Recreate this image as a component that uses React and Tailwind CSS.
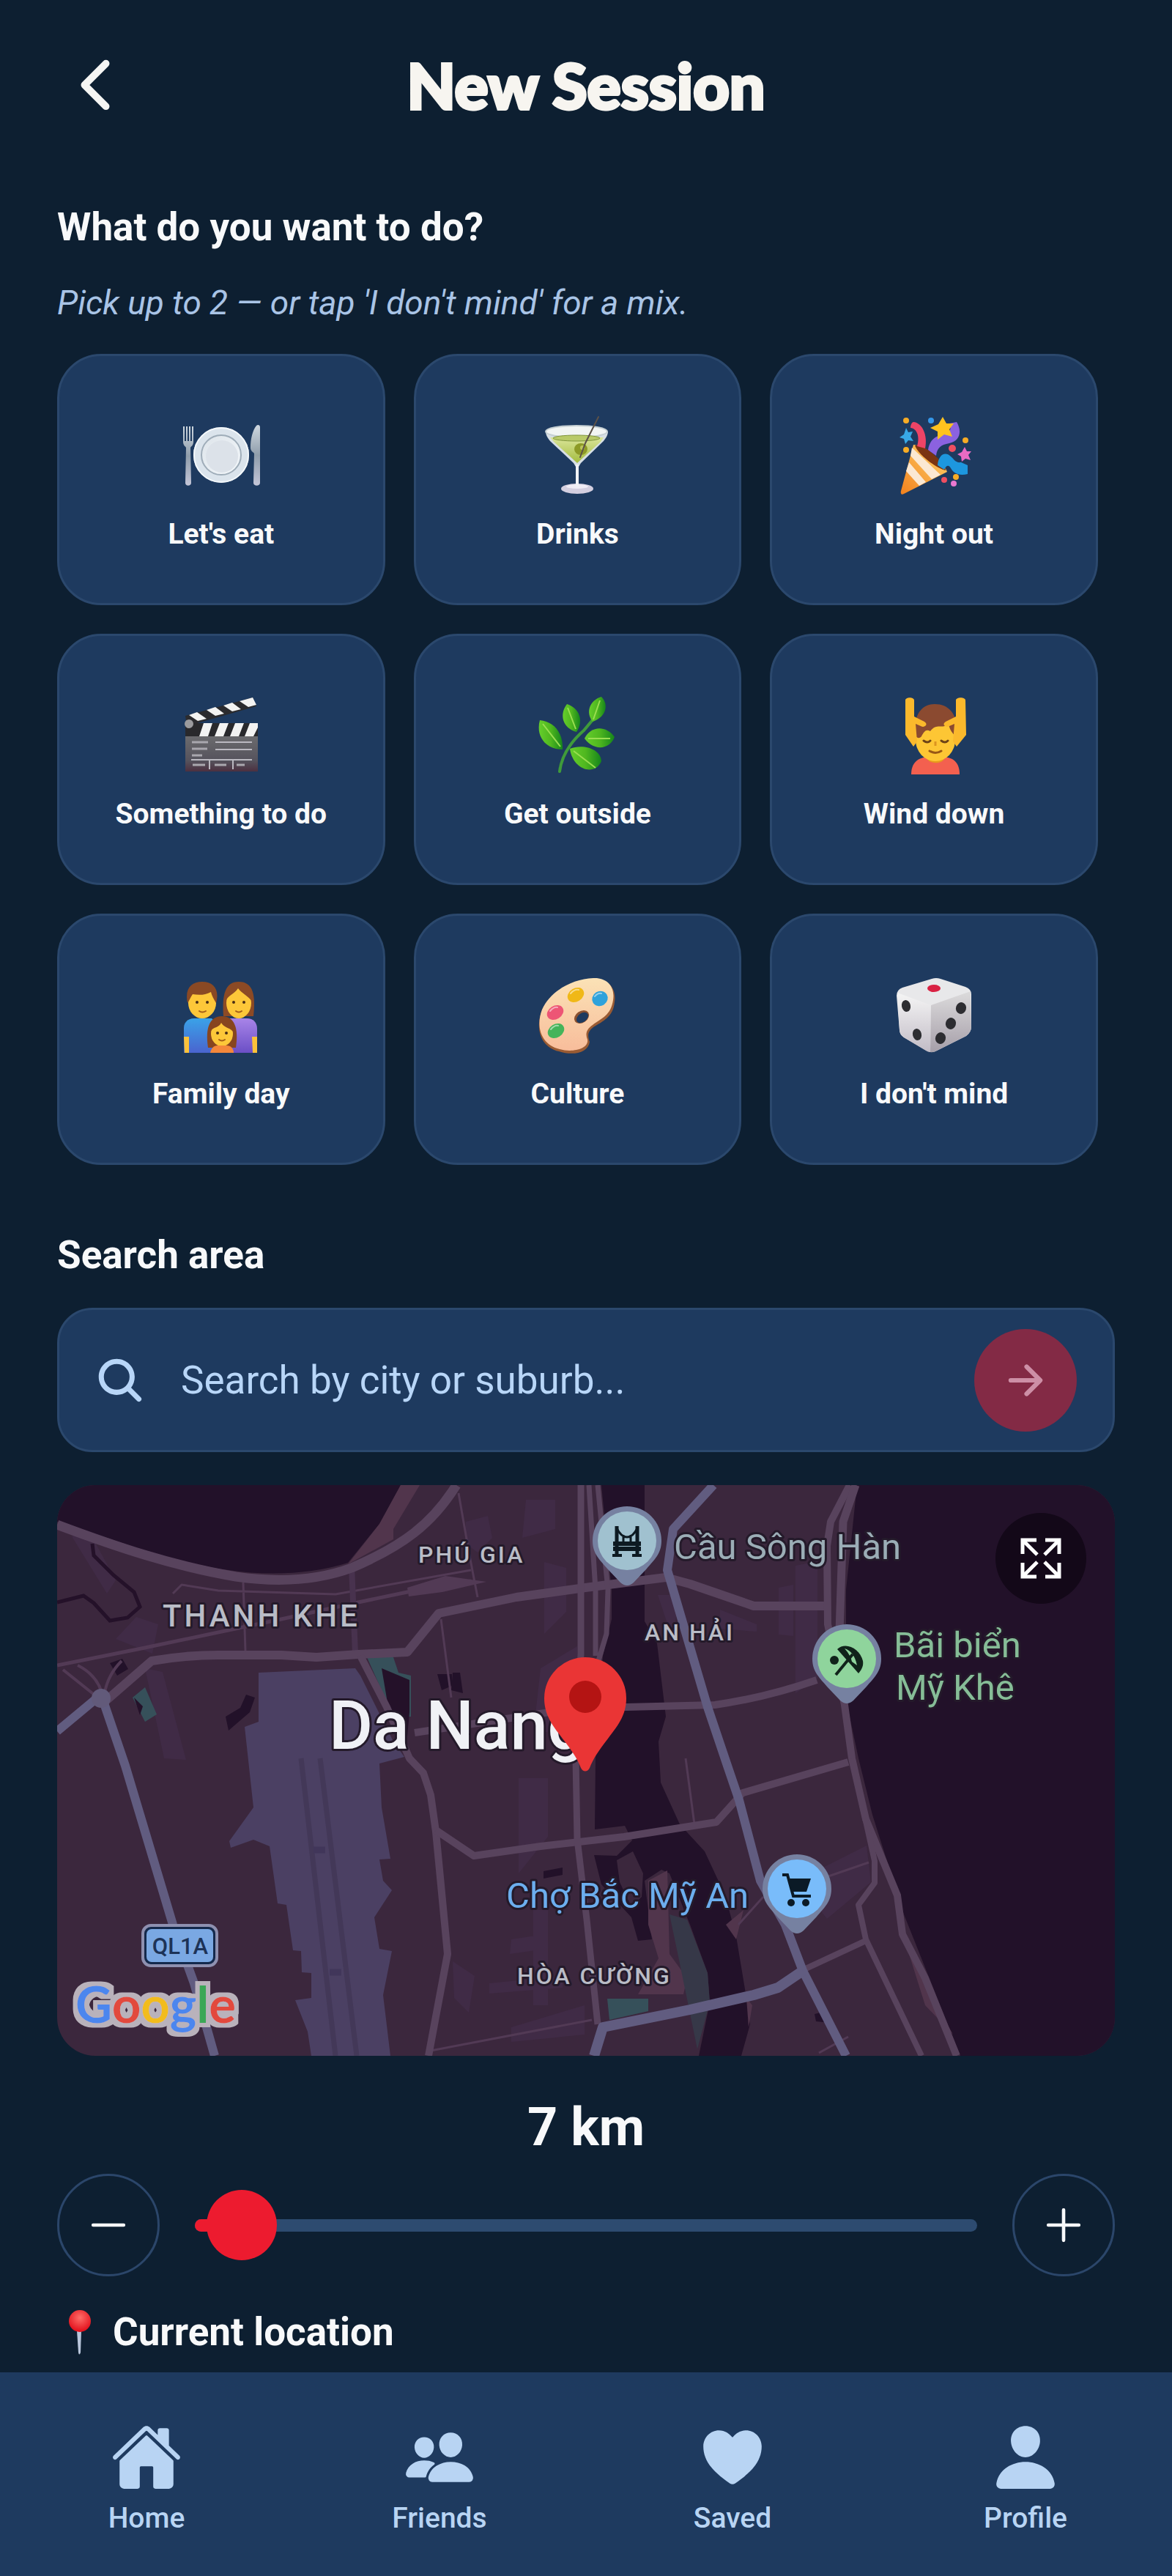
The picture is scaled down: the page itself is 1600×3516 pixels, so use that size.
import { useState } from "react";
import {
  IoAdd,
  IoArrowForward,
  IoChevronBack,
  IoHeart,
  IoHome,
  IoPeople,
  IoPerson,
  IoRemove,
  IoSearch,
} from "react-icons/io5";

function Emoji({ children }) {
  return (
    <svg viewBox="0 0 110 110" className="size-[110px]" aria-hidden="true">
      {children}
    </svg>
  );
}

function PlateEmoji() {
  return (
    <Emoji>
      <defs>
        <linearGradient id="plate" x1="0" y1="0" x2="1" y2="1">
          <stop offset="0" stopColor="#dde4ea" />
          <stop offset="1" stopColor="#f4f8fb" />
        </linearGradient>
        <linearGradient id="silver" x1="0" y1="0" x2="0" y2="1">
          <stop offset="0" stopColor="#cfd8e0" />
          <stop offset="0.5" stopColor="#8f9dab" />
          <stop offset="1" stopColor="#c4c6d8" />
        </linearGradient>
      </defs>
      <path d="M3 15v21c0 5 3 6 4 8l-1 48c0 5 8 5 8 0l-1-48c1-2 4-3 4-8V15h-2v20h-2V15h-2v20H9V15H7v20H5V15z" fill="url(#silver)" />
      <path d="M103 14c-5 6-8 18-8 30 0 5 4 6 5 8l-1 40c0 5 9 5 9 0V16c0-3-3-4-5-2z" fill="url(#silver)" />
      <circle cx="55" cy="54" r="38" fill="#dbe4ec" />
      <circle cx="55" cy="54" r="37" fill="none" stroke="#f3f7fa" strokeWidth="2" />
      <circle cx="55" cy="54" r="27" fill="url(#plate)" stroke="#9fadb9" strokeWidth="2" />
      <circle cx="56" cy="56" r="22" fill="#dce2e9" />
    </Emoji>
  );
}

function DrinkEmoji() {
  return (
    <Emoji>
      <defs>
        <linearGradient id="martini" x1="0" y1="0" x2="0" y2="1">
          <stop offset="0" stopColor="#dbe59a" />
          <stop offset="1" stopColor="#a3bc3e" />
        </linearGradient>
      </defs>
      <path d="M12 22c0 5 3 9 6 13l32 30 3 5v24l-14 5h32l-14-5V70l3-5 31-30c3-4 6-8 6-13z" fill="#d7dfe5" />
      <path d="M18 30h73l-4 6-32 29-32-29z" fill="url(#martini)" />
      <ellipse cx="54" cy="22" rx="42" ry="8" fill="#f2f5f4" stroke="#c5cfd3" strokeWidth="2" />
      <ellipse cx="54" cy="31" rx="32" ry="4" fill="#b9ca69" stroke="#7f943c" strokeWidth="1" />
      <ellipse cx="60" cy="46" rx="9" ry="8" fill="#8d9a26" />
      <circle cx="62" cy="44" r="3" fill="#bcc75b" />
      <path d="M84 2 66 38l-7 19" stroke="#5c5148" strokeWidth="2" fill="none" strokeLinecap="round" />
      <ellipse cx="55" cy="100" rx="22" ry="7" fill="#d4cfe0" />
      <ellipse cx="55" cy="97" rx="15" ry="3" fill="#efecf5" />
      <path d="M53 67h4v30h-4z" fill="#f1f2f6" />
    </Emoji>
  );
}

function PartyEmoji() {
  return (
    <Emoji>
      <defs>
        <linearGradient id="cone" x1="1" y1="0" x2="0" y2="1">
          <stop offset="0" stopColor="#ffd66e" />
          <stop offset="1" stopColor="#f2811d" />
        </linearGradient>
      </defs>
      <path d="M27 40C38 40 68 62 73 77L14 107c-3 2-5 0-4-4z" fill="url(#cone)" />
      <path d="M23 55 52 87l12-6-39-37zM17 76l18 20 9-5-23-27z" fill="#fbe8d2" />
      <path d="M29 41c10-5 42 24 42 34-12-2-38-22-42-34z" fill="#7b3412" />
      <path d="M27 9c12 1 20 18 16 36l-11-3c4-13 0-24-9-25 0-4 2-8 4-8z" fill="#ee4466" />
      <path d="M86 9c8 13 4 26-10 29-12 2-17 7-18 17l-11-8c2-16 14-20 23-22 8-2 9-8 6-14z" fill="#8b62e0" />
      <path d="M60 68c1-14 10-20 18-12 5 4 6 9 14 8l9 4v12c-12 3-19-1-23-8-3-5-6-4-9 2z" fill="#1d97df" />
      <path d="m67 2 5 9 10 0-6 8 4 10-11-3-9 7 0-11-10-5 11-5z" fill="#ffc21f" />
      <path d="m17 17 3 6 6-1-3 7 4 6-7-1-4 5-2-7-6-2 6-4z" fill="#38a8e6" />
      <path d="m97 43 3 6 6 0-4 5 3 7-7-2-5 4-1-7-5-3 6-3z" fill="#e96bc3" />
      <g fill="#f7ac25"><circle cx="17" cy="7" r="4" /><circle cx="98" cy="34" r="4" /><circle cx="17" cy="47" r="4" /><circle cx="85" cy="84" r="4" /></g>
      <g fill="#ef4f61"><circle cx="80" cy="45" r="5" /><circle cx="69" cy="88" r="4" /></g>
      <circle cx="51" cy="7" r="4" fill="#3598ea" />
      <circle cx="82" cy="93" r="4" fill="#ea78d1" />
    </Emoji>
  );
}

function ClapperEmoji() {
  return (
    <Emoji>
      <defs>
        <linearGradient id="slate" x1="0" y1="0" x2="0" y2="1">
          <stop offset="0" stopColor="#6b6b6e" />
          <stop offset="0.7" stopColor="#55525c" />
          <stop offset="1" stopColor="#4c3040" />
        </linearGradient>
      </defs>
      <path d="M6 28 98 3l5 12L8 42z" fill="#2b2b2e" />
      <path d="m11 27 12 8 12-3-13-9zM35 20l12 8 12-3-12-9zM58 14l12 8 12-3-12-9zM80 8l12 8 11-3-5-10z" fill="#f3f3f2" />
      <path d="M6 38h99v18H6z" fill="#29292c" />
      <path d="m31 38-6 18h12l6-18zM53 38l-7 18h12l7-18zM74 38l-7 18h12l7-18zM94 38l-7 18h12l6-12v-6z" fill="#f3f3f2" />
      <circle cx="11" cy="39" r="6" fill="#9b9b9e" />
      <path d="M6 56h99v48H6z" fill="url(#slate)" />
      <path d="M47 64h50M47 74h50M14 88h83M39 88v13M71 88v13" stroke="#bab8c0" strokeWidth="2" />
      <path d="M15 64h22M15 73h21M15 82h14M16 95h17M46 95h16M76 95h11" stroke="#a9a7ae" strokeWidth="3" />
    </Emoji>
  );
}

function HerbEmoji() {
  return (
    <Emoji>
      <defs>
        <linearGradient id="leaf" x1="0" y1="0" x2="1" y2="0">
          <stop offset="0" stopColor="#66ce2c" />
          <stop offset="0.5" stopColor="#4fb71f" />
          <stop offset="1" stopColor="#15851b" />
        </linearGradient>
      </defs>
      <path d="M31 104C34 80 48 62 64 48L84 24" fill="none" stroke="#3f9b3a" strokeWidth="4" strokeLinecap="round" />
      <g fill="url(#leaf)">
        <path d="M88 2C99 13 94 30 76 36 66 23 72 7 88 2z" />
        <path d="M41 12C57 17 65 34 54 50 35 45 30 26 41 12z" />
        <path d="M4 34C24 36 36 52 35 74 12 74-2 56 4 34z" />
        <path d="M65 59C73 42 94 40 106 57 99 75 77 76 65 59z" />
        <path d="M45 73C63 66 87 73 88 90 79 111 49 102 45 73z" />
      </g>
      <path d="M86 7 77 33M42 17l11 29M8 39l24 31M70 59h30M50 76l30 23" stroke="#9ade50" strokeWidth="2" />
    </Emoji>
  );
}

function MassageEmoji() {
  return (
    <Emoji>
      <path d="M24 108c0-16 9-23 23-24h21c14 1 22 8 22 24z" fill="#f3604f" />
      <path d="M46 78h23v9c-4 7-19 7-23 0z" fill="#e79a1c" />
      <ellipse cx="57" cy="61" rx="27" ry="29" fill="#fdc634" />
      <path d="M29 55c-2-27 8-43 27-43 22 0 34 18 29 44-5-4-9-10-10-17-9 8-16-2-25 10-6-3-8 0-12 7-2 3-6 3-9-1z" fill="#8b4a30" />
      <path d="M16 7c0-5 12-5 12 0v22l14 7c6 4 0 9-5 6l-7-3 2 24-5 7-11-16z" fill="#fbb92c" />
      <path d="M98 7c0-5-13-5-13 0v22l-14 7c-6 4 0 9 5 6l7-3-2 24 5 7 13-16z" fill="#fbb92c" />
      <path d="M41 62q5 4 9 0M65 62q5 4 9 0" fill="none" stroke="#6c4317" strokeWidth="3" strokeLinecap="round" />
      <path d="M57 63v6" stroke="#dc9420" strokeWidth="3" />
      <path d="M49 76q8 5 16 0" fill="none" stroke="#985815" strokeWidth="3" strokeLinecap="round" />
    </Emoji>
  );
}

function FamilyEmoji() {
  return (
    <Emoji>
      <defs>
        <linearGradient id="dad" x1="0" y1="0" x2="0" y2="1">
          <stop offset="0" stopColor="#3aa2e8" />
          <stop offset="1" stopColor="#4a64cf" />
        </linearGradient>
        <linearGradient id="mom" x1="0" y1="0" x2="0" y2="1">
          <stop offset="0" stopColor="#a884e8" />
          <stop offset="1" stopColor="#6b4fc6" />
        </linearGradient>
      </defs>
      <path d="M4 106V72c0-8 6-13 14-13h24l12 12v35z" fill="url(#dad)" />
      <path d="M54 106V71l12-12h24c9 0 14 6 14 14v33z" fill="url(#mom)" />
      <path d="M4 84h7v22H5zM97 84h7v22h-6z" fill="#fcc23a" />
      <path d="M58 56c-2-29 2-47 21-47 20 0 23 19 20 47z" fill="#8c4a25" />
      <ellipse cx="29" cy="38" rx="19" ry="21" fill="#fdc739" />
      <path d="M9 38C5 18 14 9 29 9c16 0 24 11 19 29-3-5-6-10-7-15-9 5-18 4-25 3-3 4-4 8-7 12z" fill="#8a4924" />
      <ellipse cx="79" cy="38" rx="17" ry="21" fill="#fdc739" />
      <path d="M61 36c3-9 11-9 17-18 6 8 14 10 19 18 2-16-5-26-18-26S58 22 61 36z" fill="#8c4a25" />
      <path d="M37 99c-4-27 2-43 19-43s23 16 19 43z" fill="#87451f" />
      <ellipse cx="56" cy="80" rx="15" ry="17" fill="#fdc739" />
      <path d="M41 76c4-6 11-4 14-11 4 7 11 6 16 12 1-12-5-19-15-19s-16 7-15 18z" fill="#87451f" />
      <path d="M40 106c1-6 5-10 10-10h12c6 0 10 4 10 10z" fill="#f4873b" />
      <g fill="#4a2d16">
        <circle cx="22" cy="37" r="2" /><circle cx="36" cy="37" r="2" /><circle cx="72" cy="37" r="2" /><circle cx="86" cy="37" r="2" /><circle cx="50" cy="79" r="2" /><circle cx="62" cy="79" r="2" />
      </g>
      <path d="M25 49q4 3 9 0M75 49q4 3 8 0M52 88q4 3 8 0" fill="none" stroke="#a35d18" strokeWidth="2" strokeLinecap="round" />
    </Emoji>
  );
}

function PaletteEmoji() {
  return (
    <Emoji>
      <defs>
        <linearGradient id="wood" x1="0" y1="0" x2="0" y2="1">
          <stop offset="0" stopColor="#fbe2b6" />
          <stop offset="1" stopColor="#f8bd9b" />
        </linearGradient>
      </defs>
      <path d="M78 6c19-2 31 12 28 31-2 20-16 26-29 34-8 6-8 12-5 20-2 16-24 19-42 13C5 98-2 74 6 50 17 24 48 7 78 6z" fill="#9a5b33" />
      <path d="M77 4c18-1 30 11 27 30-3 21-16 25-28 34-9 6-10 13-7 20 2 13-21 18-38 13C6 95-2 71 7 47 18 22 48 5 77 4z" fill="url(#wood)" />
      <ellipse cx="61" cy="57" rx="11" ry="8" transform="rotate(-35 61 57)" fill="#8b5130" />
      <ellipse cx="62" cy="58" rx="9" ry="6" transform="rotate(-35 62 58)" fill="#1e3a5f" />
      <ellipse cx="53" cy="27" rx="12" ry="9" transform="rotate(-32 53 27)" fill="#f0b817" />
      <ellipse cx="86" cy="32" rx="11" ry="10" transform="rotate(-32 86 32)" fill="#2fa2db" />
      <ellipse cx="25" cy="51" rx="12" ry="9" transform="rotate(-32 25 51)" fill="#ed5575" />
      <ellipse cx="26" cy="76" rx="12" ry="9" transform="rotate(-32 26 76)" fill="#45b45a" />
      <path d="M46 25q5-6 11-5M79 29q4-5 9-4M18 49q5-6 10-5M19 74q5-6 10-5" fill="none" stroke="#ffffff" strokeOpacity="0.5" strokeWidth="2" strokeLinecap="round" />
    </Emoji>
  );
}

function DiceEmoji() {
  return (
    <Emoji>
      <defs>
        <linearGradient id="diceRight" x1="0" y1="0" x2="0" y2="1">
          <stop offset="0" stopColor="#dcdbdc" />
          <stop offset="1" stopColor="#a69fa9" />
        </linearGradient>
        <linearGradient id="diceLeft" x1="0" y1="0" x2="0" y2="1">
          <stop offset="0" stopColor="#f5f5f5" />
          <stop offset="1" stopColor="#c2bcc6" />
        </linearGradient>
      </defs>
      <path d="M52 5q6-2 12 0l34 11q8 3 8 10v44q0 8-7 13L59 103q-7 4-14 0L14 85q-6-4-6-10L4 28q0-8 8-11z" fill="#e8e8ea" />
      <path d="M5 24 51 41l-1 64q-3 0-6-2L14 85q-5-4-6-10z" fill="url(#diceLeft)" />
      <path d="m51 41 54-19 1 48q0 8-7 13L59 103q-5 3-9 2z" fill="url(#diceRight)" />
      <ellipse cx="55" cy="18" rx="9" ry="5" fill="#d92143" />
      <g fill="#2d2d31">
        <ellipse cx="17" cy="42" rx="6" ry="8" transform="rotate(-12 17 42)" />
        <ellipse cx="32" cy="81" rx="6" ry="8" transform="rotate(-12 32 81)" />
        <ellipse cx="92" cy="45" rx="7" ry="8" transform="rotate(18 92 45)" />
        <ellipse cx="78" cy="66" rx="7" ry="8" transform="rotate(18 78 66)" />
        <ellipse cx="64" cy="86" rx="7" ry="8" transform="rotate(18 64 86)" />
      </g>
    </Emoji>
  );
}

const ACTIVITIES = [
  ["Let's eat", PlateEmoji],
  ["Drinks", DrinkEmoji],
  ["Night out", PartyEmoji],
  ["Something to do", ClapperEmoji],
  ["Get outside", HerbEmoji],
  ["Wind down", MassageEmoji],
  ["Family day", FamilyEmoji],
  ["Culture", PaletteEmoji],
  ["I don't mind", DiceEmoji],
];

function PoiPin({ x, y, fill, children }) {
  return (
    <g transform={`translate(${x} ${y})`}>
      <path d="M0-47a47 47 0 0 1 47 47c0 18-10 26-20 38L9 57q-9 8-18 0l-18-19C-37 26-47 18-47 0A47 47 0 0 1 0-47z" fill="#7681a1" />
      <circle r="40" fill={fill} />
      {children}
    </g>
  );
}

function CityMap() {
  return (
    <svg
      viewBox="0 0 1444 779"
      preserveAspectRatio="xMidYMid slice"
      role="img"
      aria-label="Map of Da Nang"
      className="block size-full"
    >
      <defs>
        <filter id="logoHalo" x="-10%" y="-20%" width="120%" height="140%">
          <feMorphology in="SourceAlpha" operator="dilate" radius="6" result="grown" />
          <feFlood floodColor="#b9b2bb" />
          <feComposite in2="grown" operator="in" result="halo" />
          <feMerge>
            <feMergeNode in="halo" />
            <feMergeNode in="SourceGraphic" />
          </feMerge>
        </filter>
      </defs>
      <rect width="1444" height="779" fill="#3b273d" />

      {/* built-up blocks */}
      <g fill="#402b46">
        <path d="M20 70l22-10 38 70-12 18zM80 210l28-30 30 10-8 40zM120 250l24 5 32 120-30-2zM558 50l30-8 6 30-20 20-16-12zM640 20h40v40l-45 12zM665 105l30 8v60l-30 30zM660 250l50-30v110l-60 10zM630 400h40v80l-40 50zM650 580h20v130h-20zM590 680l100-10v16l-100 8zM820 150h30l-10 60zM985 140l20-4v70l-20-2zM1008 110l30-6v160l-30 20zM905 170l50 20v10l-50-4zM1010 540l95-48 6 50-60 50zM620 740l100-30v40l-100 10zM540 650l30 20-8 50-20-20zM620 620l40-6v20l-42 6z" />
      </g>

      {/* water */}
      <g fill="#221129">
        <path d="M0 0h469l-29 53-43 53c-50 16-110 18-163 10-80-10-160-44-234-66z" />
        <path d="M743 0h59v186l17 30 12 100-10 34 3 56 26 57 34 37 28 60 15 56 14 84 5 36-12 43h-58l15-73-3-40-24-66-28-70-11-5-23 15 10 80-19 2-9-32-41-45-10-40 31 1 21-21-10-20-41 5 1-97 10-140 12-50v-40z" />
        <path d="M1092 0h352v779h-211l-77-193-43-136-19-77-17-80V143z" />
        <path d="m72 243 17-6 8 14-15 9zM258 286l12 4-7 20-29 25-4-19 20-12zM519 258h20v16l-14 6zM540 256h10l4 28-16-4zM1034 722l16-4 6 16-20-2zM664 527l26-5v10l-26 5z" />
      </g>
      <path d="M764 512l22-12 14 30-2 32-14 14-16-34z" fill="#3b273d" />
      <path d="M48 80l2 16 27 27 28 23 8 20-17 15-24 4-22-24-14-10-36 9" fill="none" stroke="#241129" strokeWidth="5" />

      {/* sand and parks */}
      <path d="M469 0h26l-36 60v14l-62 34 43-55zM807 540l26-14 3 114 24 33-5 22h-62l28-49-14-46zM1163 640l60 110-38-40zM941 700l8 10-5 30zM913 600l24-20-10 40z" fill="#51354c" />
      <path d="M836 586l24 7 28 73 3 40-17 64-24-117z" fill="#363848" />
      <path d="M751 701h56v17l-53 12zM423 235h36l7 21 17 4v56h-24zM103 290l17-14 16 37-16 10z" fill="#36505a" />
      <path d="M443 250l38 16v44l-3 33-26-40zM105 290l12 12-4 12z" fill="#241129" />

      {/* airport */}
      <path d="M275 256l132-6 7 10 45 90 15 21-34 9 3 60 12 70-15 1 5 29 12 13-24 37 7 43 17 3-12 60 10 83H347l-5-33-17-43 22-3v-34l-13-1-1-29-11-1-9-62-12-2-11-78-22-9-31 11-2-9 33-46-12-110 19-7z" fill="#4b4063" />
      <path d="M333 373l47 406M359 373l50 406" stroke="#433858" strokeWidth="7" />
      <path d="M350 498h16M372 665h16" stroke="#41365a" strokeWidth="9" />

      {/* minor roads */}
      <g fill="none" stroke="#523a55" strokeWidth="3" strokeLinejoin="round">
        <path d="M158 148l12-12 50 8 160 5 185-33M254 133l3 93M548 11l14 80 12 62M524 183l14 107M858 373l12 90M1050 535l58-20M930 600l34-38M510 772l220-42M1040 775l40-22" />
        <path d="M0 246l115-23 119-25 72-15 105-23 67-14 87-15" strokeWidth="5" />
        <path d="M8 252l50 40M28 246q30 15 35 46M88 240q-20 20-24 48" strokeWidth="4" />
      </g>
      <path d="M478 140l52-16 56 8-60 14-46 6z" fill="#523a55" />

      {/* main roads */}
      <g fill="none" stroke="#58435d" strokeWidth="10" strokeLinejoin="round">
        <path d="M402 110l5 120" strokeWidth="8" stroke="#48324e" />
        <path d="M0 54c80 30 160 57 244 71 70 10 120 2 158-12 70-30 110-60 143-113" strokeWidth="13" />
        <path d="M60 300l69-60q46-8 91-8h86l48 3 57-4 67-3 43-53 106-22 94-13 110-14 33 9 87 30h100" strokeWidth="12" />
        <path d="M414 233l36 70 31 70 19 20 10 30 7 50 16 167-26 139" />
        <path d="M517 471l52 35 91-13 114-13 126-20 36-40 144-42" />
        <path d="M488 338l230-35h60l120-3q70-10 139-34" />
        <path d="M715 0v230l-7 143 2 110 13 110 15 143" strokeWidth="9" />
        <path d="M726 0l9 143v90M738 0l14 143-2 60-12 40" strokeWidth="7" />
        <path d="M1082 0l-26 50-5 33 1 107 23 110 10 73 19 83 43 104 7 53 31 60 43 106" />
        <path d="M1090 0l-17 50-5 150" strokeWidth="11" />
        <path d="M1085 373l31 140v30l-22 30 10 47 76 159M1022 660l84-39" strokeWidth="8" />
      </g>

      {/* highways */}
      <g fill="none" stroke="#615c80" strokeWidth="12" strokeLinejoin="round">
        <path d="M0 336l60-50 33 97 27 90 38 127 29 80 28 99" />
        <path d="M896 0l-55 60-8 56 55 187 27 80 16 47 29 110 34 60 24 63 59 116" />
        <path d="M1018 663l-34 23-33 10-87 20-119 24-12 39" strokeWidth="14" />
      </g>
      <circle cx="60" cy="291" r="13" fill="#625a7a" />

      {/* district and place names */}
      <g
        fontFamily="Roboto, sans-serif"
        stroke="#241a2a"
        strokeWidth="6"
        strokeLinejoin="round"
        style={{ paintOrder: "stroke" }}
      >
        <g fill="#b9bcc6" fontWeight="500" fontSize="32" className="tracking-[3px]">
          <text x="493" y="106">PHÚ GIA</text>
          <text x="802" y="212">AN HẢI</text>
          <text x="628" y="681">HÒA CƯỜNG</text>
          <text x="144" y="193" fontSize="42" className="tracking-[4px]">THANH KHE</text>
        </g>
        <g fontSize="49">
          <text x="842" y="101" fill="#9badb6">Cầu Sông Hàn</text>
          <text x="1142" y="235" fill="#86bd97">Bãi biển</text>
          <text x="1145" y="293" fill="#86bd97">Mỹ Khê</text>
          <text x="613" y="577" fill="#6caeee">Chợ Bắc Mỹ An</text>
        </g>
        <text x="371" y="360" fill="#f0f1f5" fontSize="92" fontWeight="500">Da Nang</text>
      </g>

      {/* road shield */}
      <rect x="117" y="601" width="101" height="55" rx="11" fill="#14294c" stroke="#8e90b0" strokeWidth="4" />
      <rect x="122" y="606" width="91" height="45" rx="7" fill="#7aa8e3" />
      <text x="168" y="640" textAnchor="middle" fontFamily="Roboto, sans-serif" fontSize="31" fontWeight="500" fill="#1d3357">QL1A</text>

      <text x="25" y="734" fontFamily="Lato, sans-serif" fontWeight="700" fontSize="69" filter="url(#logoHalo)">
        <tspan fill="#4c86ee">G</tspan>
        <tspan fill="#e2483c">o</tspan>
        <tspan fill="#f2bc1c">o</tspan>
        <tspan fill="#4c86ee">g</tspan>
        <tspan fill="#3ba757">l</tspan>
        <tspan fill="#e2483c">e</tspan>
      </text>

      <PoiPin x={778} y={76} fill="#a0c1cf">
        <g stroke="#0d1a22" fill="none">
          <path d="M-19 4h38M-19 11h38" strokeWidth="6" />
          <path d="M-14-20v38M14-20v38" strokeWidth="5" />
          <path d="M-20 20h13M7 20h13" strokeWidth="4" />
          <path d="M-14-17Q-8-5 0-5t14-12M-5-8v12M5-8v12" strokeWidth="3" />
        </g>
      </PoiPin>
      <PoiPin x={1078} y={237} fill="#8fd49c">
        <path d="M-13-13C-2-24 18-14 22 3c1 6-1 11-6 17z" fill="#10231a" />
        <path d="M-3-14Q10-10 14 9L7 4Q5-5-3-14z" fill="#8fd49c" />
        <path d="M-15 22 8-6" stroke="#10231a" strokeWidth="4" />
        <circle cx="-17" cy="2" r="6" fill="#10231a" />
      </PoiPin>
      <PoiPin x={1010} y={551} fill="#79bcfa">
        <path d="M-20-19h7l8 29h24" fill="none" stroke="#0b1a26" strokeWidth="4" />
        <path d="M-12-14h31L13 4H-6z" fill="#0b1a26" />
        <circle cx="-8" cy="19" r="5" fill="#0b1a26" />
        <circle cx="12" cy="19" r="5" fill="#0b1a26" />
      </PoiPin>

      {/* selected centre */}
      <path d="M721 235a56 56 0 0 1 56 56c0 24-13 39-25 55-13 17-20 27-25 40-3 6-9 6-12 0-5-13-12-23-25-40-12-16-25-31-25-55a56 56 0 0 1 56-56z" fill="#ea3535" />
      <circle cx="721" cy="289" r="22" fill="#b41413" />
    </svg>
  );
}

const TABS = [
  ["Home", IoHome],
  ["Friends", IoPeople],
  ["Saved", IoHeart],
  ["Profile", IoPerson],
];

const MIN_KM = 1;
const MAX_KM = 101;

export default function App() {
  const [km, setKm] = useState(7);
  const [picked, setPicked] = useState([]);
  const fill = ((km - MIN_KM) / (MAX_KM - MIN_KM)) * 100;

  const toggle = (name) =>
    setPicked((old) =>
      old.includes(name) ? old.filter((n) => n !== name) : [...old, name].slice(-2)
    );

  return (
    <div className="flex min-h-screen flex-col bg-[#0d1f31] font-[Roboto,sans-serif] text-[#f8f9fa]">
      <header className="grid grid-cols-[104px_1fr_104px] items-center px-[78px] pt-[60px]">
        <button type="button" aria-label="Back" className="flex h-[112px] items-center">
          <IoChevronBack className="size-[104px] text-[#f5f5f3]" />
        </button>
        <h1 className="text-center font-[Lato,sans-serif] text-[86px] leading-[112px] font-black text-[#f7f5f0] [-webkit-text-stroke:4px_#f7f5f0]">
          New Session
        </h1>
      </header>

      <main className="flex-1 px-[78px] pt-[106px]">
        <h2 className="text-[53px] leading-[64px] font-bold">What do you want to do?</h2>
        <p className="mt-[43px] text-[46px] leading-[56px] text-[#a9c4e6] italic">
          Pick up to 2 — or tap 'I don't mind' for a mix.
        </p>

        <div className="mt-[42px] grid grid-cols-[repeat(3,31%)] gap-[39px]">
          {ACTIVITIES.map(([name, Icon]) => (
            <button
              key={name}
              type="button"
              aria-pressed={picked.includes(name)}
              onClick={() => toggle(name)}
              className="flex flex-col items-center gap-7 rounded-[60px] border-3 border-[#2b486d] bg-[#1e3a5f] pt-[81px] pb-[70px]"
            >
              <Icon />
              <span className="text-[39px] leading-[48px] font-bold">{name}</span>
            </button>
          ))}
        </div>

        <h2 className="mt-[91px] text-[53px] leading-[64px] font-bold">
          <label htmlFor="area">Search area</label>
        </h2>
        <form
          onSubmit={(e) => e.preventDefault()}
          className="mt-10 flex h-[197px] items-center rounded-[48px] border-3 border-[#2b486d] bg-[#1e3a5f] pr-[49px] pl-[47px]"
        >
          <IoSearch className="size-[72px] shrink-0 text-[#b8d6f8]" />
          <input
            id="area"
            type="text"
            placeholder="Search by city or suburb..."
            className="ml-[47px] min-w-0 flex-1 bg-transparent text-[53px] leading-[64px] outline-none placeholder:text-[#b8d6f8]"
          />
          <button
            type="submit"
            aria-label="Search"
            className="flex size-[140px] items-center justify-center rounded-full bg-[#832a45]"
          >
            <IoArrowForward className="size-[66px] text-[#cd8fa6]" />
          </button>
        </form>

        <div className="relative mt-[45px] aspect-[1444/779] overflow-hidden rounded-[52px]">
          <CityMap />
          <button
            type="button"
            aria-label="Expand map"
            className="absolute top-[38px] right-[39px] flex size-[124px] items-center justify-center rounded-full bg-[#130818]"
          >
            <svg viewBox="0 0 56 56" className="size-14" fill="none" stroke="#ffffff" strokeWidth="5">
              <path d="M3 22V3h19M3 3l20 20M34 3h19v19M53 3 33 23M3 34v19h19M3 53l20-20M53 34v19H34M53 53 33 33" />
            </svg>
          </button>
        </div>

        <output htmlFor="radius" className="mt-14 block text-center text-[72px] leading-[84px] font-bold">
          {km} km
        </output>

        <div className="mt-[21px] flex items-center">
          <button
            type="button"
            aria-label="Decrease radius"
            onClick={() => setKm(Math.max(MIN_KM, km - 1))}
            className="flex size-[140px] shrink-0 items-center justify-center rounded-full border-3 border-[#2b466a]"
          >
            <IoRemove className="size-[74px]" />
          </button>
          <div className="relative flex h-[96px] flex-1 items-center">
            <div className="mx-12 h-[17px] flex-1 overflow-hidden rounded-full bg-[#2d4b70]">
              <div className="h-full bg-[#ed1b2f]" style={{ width: `${fill}%` }} />
            </div>
            <input
              id="radius"
              type="range"
              aria-label="Search radius"
              min={MIN_KM}
              max={MAX_KM}
              value={km}
              onChange={(e) => setKm(Number(e.target.value))}
              className="absolute inset-0 size-full cursor-pointer appearance-none bg-transparent [&::-webkit-slider-thumb]:size-24 [&::-webkit-slider-thumb]:appearance-none [&::-webkit-slider-thumb]:rounded-full [&::-webkit-slider-thumb]:bg-[#ed1b2f]"
            />
          </div>
          <button
            type="button"
            aria-label="Increase radius"
            onClick={() => setKm(Math.min(MAX_KM, km + 1))}
            className="flex size-[140px] shrink-0 items-center justify-center rounded-full border-3 border-[#2b466a]"
          >
            <IoAdd className="size-[74px]" />
          </button>
        </div>

        <p className="mt-[44px] mb-[23px] flex items-center gap-4 text-[53px] leading-[64px] font-bold">
          <svg viewBox="0 0 60 64" className="h-16 w-[60px]" aria-hidden="true">
            <defs>
              <radialGradient id="pushpin" cx="0.5" cy="0.35" r="0.6">
                <stop offset="0" stopColor="#ff6d68" />
                <stop offset="1" stopColor="#e3141f" />
              </radialGradient>
            </defs>
            <path d="M30 28l3 2-1 30q-2 5-3 0l-2-30z" fill="#b9c6db" />
            <circle cx="31" cy="17" r="15" fill="url(#pushpin)" />
          </svg>
          Current location
        </p>
      </main>

      <nav className="grid grid-cols-4 bg-[#1e3a5f] pt-[67px] pb-[55px]">
        {TABS.map(([name, Icon]) => (
          <a
            key={name}
            href={`#${name.toLowerCase()}`}
            className="flex flex-col items-center gap-[10px] text-[39px] leading-[48px] font-medium text-[#b8d4f3]"
          >
            <Icon className="size-[98px]" />
            {name}
          </a>
        ))}
      </nav>
    </div>
  );
}
